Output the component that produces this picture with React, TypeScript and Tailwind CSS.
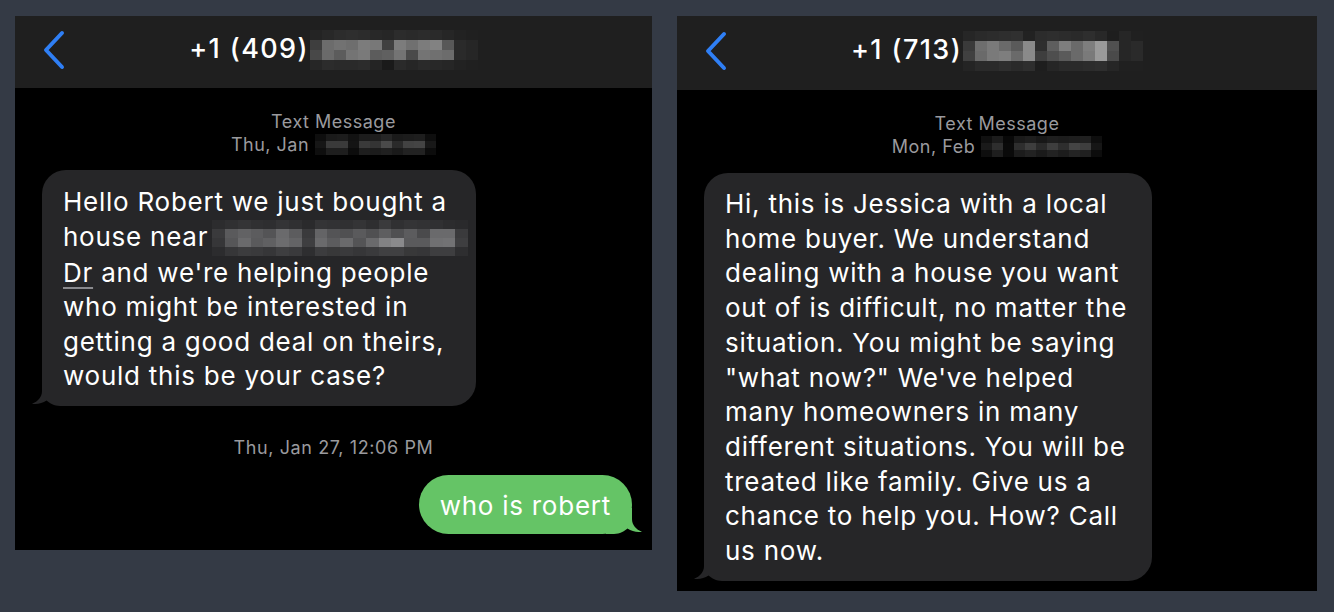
import React from "react";

const FONT = { fontFamily: "Inter, 'Noto Sans', 'Liberation Sans', sans-serif" };

function Pixels({ rows, cw, rh }: { rows: string[][]; cw: number; rh: number }) {
  return (
    <div className="flex flex-col">
      {rows.map((r, i) => (
        <div key={i} className="flex">
          {r.map((c, j) => (
            <div key={j} style={{ width: cw, height: rh, background: c }} />
          ))}
        </div>
      ))}
    </div>
  );
}

const titleBlurL = [
  ["#242424", "#282828", "#2c2c2c", "#2e2e2e", "#2c2c2c", "#282828", "#262626", "#2c2c2c", "#2a2a2a", "#2c2c2c", "#2a2a2a", "#262626", "#222222", "#202020"],
  ["#3e3e3e", "#6c6c6c", "#727272", "#6e6e6e", "#7c7c7c", "#787878", "#404040", "#7c7c7c", "#707070", "#7c7c7c", "#828282", "#585858", "#2a2a2a", "#262626"],
  ["#484848", "#6a6a6a", "#5c5c5c", "#747474", "#7a7a7a", "#5c5c5c", "#606060", "#747474", "#4a4a4a", "#747474", "#707070", "#6c6c6c", "#2a2a2a", "#262626"],
  ["#262626", "#2c2c2c", "#2a2a2a", "#2a2a2a", "#2c2c2c", "#242424", "#1a1a1a", "#2a2a2a", "#262626", "#2a2a2a", "#282828", "#262626", "#222222", "#202020"],
];

const titleBlurR = [
  ["#262626", "#2a2a2a", "#2c2c2c", "#2e2e2e", "#303030", "#222222", "#2c2c2c", "#2e2e2e", "#2c2c2c", "#2a2a2a", "#2e2e2e", "#282828", "#1e1e1e", "#262626", "#202020"],
  ["#3a3a3a", "#6e6e6e", "#7a7a7a", "#6a6a6a", "#5a5a5a", "#8a8a8a", "#2e2e2e", "#5e5e5e", "#7e7e7e", "#6a6a6a", "#7e7e7e", "#9a9a9a", "#505050", "#262626", "#2a2a2a"],
  ["#404040", "#6a6a6a", "#7a7a7a", "#7e7e7e", "#6a6a6a", "#8a8a8a", "#3e3e3e", "#4e4e4e", "#5a5a5a", "#6a6a6a", "#7a7a7a", "#9a9a9a", "#4a4a4a", "#262626", "#2a2a2a"],
  ["#242424", "#2a2a2a", "#2a2a2a", "#2e2e2e", "#2a2a2a", "#2e2e2e", "#1e1e1e", "#262626", "#2a2a2a", "#2a2a2a", "#2c2c2c", "#2e2e2e", "#262626", "#202020", "#202020"],
];

const dateBlurL = [
  ["#0e0e0e", "#1a1a1a", "#1c1c1c", "#121212", "#1c1c1c", "#1e1e1e", "#262626", "#1a1a1a", "#1c1c1c", "#1e1e1e", "#0e0e0e"],
  ["#161616", "#3a3a3a", "#3a3a3a", "#141414", "#3a3a3a", "#343434", "#4a4a4a", "#2a2a2a", "#424242", "#444444", "#181818"],
  ["#0e0e0e", "#1e1e1e", "#1e1e1e", "#0c0c0c", "#1e1e1e", "#1c1c1c", "#202020", "#1a1a1a", "#222222", "#222222", "#0c0c0c"],
];

const dateBlurR = [
  ["#101010", "#1c1c1c", "#080808", "#1a1a1a", "#1e1e1e", "#181818", "#1e1e1e", "#1c1c1c", "#1e1e1e", "#202020", "#0e0e0e"],
  ["#1a1a1a", "#2e2e2e", "#0a0a0a", "#2e2e2e", "#3e3e3e", "#2a2a2a", "#3e3e3e", "#2e2e2e", "#444444", "#3e3e3e", "#161616"],
  ["#0e0e0e", "#1e1e1e", "#0a0a0a", "#1c1c1c", "#222222", "#1a1a1a", "#222222", "#1c1c1c", "#242424", "#202020", "#0c0c0c"],
];

const addrBlur = [
  ["#2c2c2e", "#303032", "#343436", "#303032", "#2e2e30", "#343436", "#303032", "#2a2a2c", "#343436", "#323234", "#303032", "#343436", "#2e2e30", "#3a3a3c", "#303032", "#343436", "#323234", "#303032", "#2c2c2e", "#2a2a2c"],
  ["#3a3a3c", "#5a5a5c", "#626264", "#5c5c5e", "#545456", "#6a6a6c", "#5c5c5e", "#3a3a3c", "#646466", "#545456", "#505052", "#5a5a5c", "#505052", "#5e5e60", "#505052", "#5c5c5e", "#4a4a4c", "#6a6a6c", "#6a6a6c", "#3a3a3c"],
  ["#363638", "#565658", "#6a6a6c", "#5a5a5c", "#606062", "#6c6c6e", "#646466", "#3e3e40", "#6a6a6c", "#5c5c5e", "#6a6a6c", "#545456", "#6a6a6c", "#828284", "#8a8a8c", "#5a5a5c", "#5a5a5c", "#707072", "#727274", "#3e3e40"],
  ["#2c2c2e", "#363638", "#3c3c3e", "#3a3a3c", "#363638", "#3e3e40", "#3a3a3c", "#2e2e30", "#3c3c3e", "#383839", "#3a3a3c", "#363638", "#3a3a3c", "#404042", "#404042", "#383839", "#363638", "#3e3e40", "#3e3e40", "#2e2e30"],
];

function Chevron() {
  return (
    <svg width="26" height="40" viewBox="0 0 26 40" fill="none">
      <path d="M21 3 L5 20 L21 37" stroke="#2f7ff5" strokeWidth="4" strokeLinecap="round" strokeLinejoin="round" />
    </svg>
  );
}

function Tail({ color, side }: { color: string; side: "left" | "right" }) {
  return (
    <svg
      width="36"
      height="26"
      viewBox="0 0 36 26"
      className={side === "left" ? "absolute left-[-10px] bottom-0" : "absolute right-[-10px] bottom-0 scale-x-[-1]"}
    >
      <path d="M10 0 L10 11 C10 17 6 21.5 0 23.8 C5 24.6 10.5 23.4 14.5 20.6 C18 23.6 22 26 28 26 L36 26 L36 0 Z" fill={color} />
    </svg>
  );
}

function Header({ area, blur }: { area: string; blur: string[][] }) {
  return (
    <div className="grid grid-cols-[1fr_auto_1fr] items-center bg-[#1f1f1f] h-full pb-[5px]">
      <div className="pl-[26px]">
        <Chevron />
      </div>
      <div className="flex items-center">
        <span className="text-white text-[27px] font-[550] tracking-[1.4px]">+1 ({area})</span>
        <div className="ml-[1px]">
          <Pixels rows={blur} cw={12} rh={10} />
        </div>
      </div>
      <div />
    </div>
  );
}

function Meta({ day, blur }: { day: string; blur: string[][] }) {
  return (
    <div className="flex flex-col items-center text-[18px] leading-[23px] tracking-[0.5px] text-[#9a9a9e] pt-[22px]">
      <div>Text Message</div>
      <div className="flex items-center">
        <span>{day}</span>
        <div className="ml-[6px]">
          <Pixels rows={blur} cw={11} rh={7} />
        </div>
      </div>
    </div>
  );
}

export default function App() {
  return (
    <div className="w-[1334px] h-[612px] bg-[#343a45] flex items-start pt-[16px] pl-[15px] gap-[25px]" style={FONT}>
      {/* Left panel */}
      <div className="w-[637px] h-[534px] bg-black flex flex-col">
        <div className="h-[72px]">
          <Header area="409" blur={titleBlurL} />
        </div>
        <div className="flex flex-col">
          <Meta day="Thu, Jan" blur={dateBlurL} />
          <div className="relative ml-[27px] mt-[14px] w-[434px] rounded-[24px] bg-[#262628] pl-[21px] pt-[15px] pb-[12px] text-white text-[26px] leading-[34.6px] tracking-[0.75px]">
            <Tail color="#262628" side="left" />
            <div className="relative">
              <div className="whitespace-nowrap">Hello Robert we just bought a</div>
              <div className="whitespace-nowrap flex items-center">
                <span>house near</span>
                <div className="ml-[4px]">
                  <Pixels rows={addrBlur} cw={12.8} rh={9} />
                </div>
              </div>
              <div className="whitespace-nowrap">
                <span className="underline decoration-[#8a8a8e] decoration-[1.5px] underline-offset-[5px]">Dr</span> and we're helping people
              </div>
              <div className="whitespace-nowrap">who might be interested in</div>
              <div className="whitespace-nowrap">getting a good deal on theirs,</div>
              <div className="whitespace-nowrap">would this be your case?</div>
            </div>
          </div>
          <div className="text-center text-[18px] leading-[23px] tracking-[0.6px] text-[#9a9a9e] mt-[30px]">Thu, Jan 27, 12:06 PM</div>
          <div className="relative self-end mr-[20px] mt-[16px] h-[59px] rounded-[30px] bg-[#65c466] px-[21px] flex items-center text-white text-[26px] tracking-[0.75px]">
            <Tail color="#65c466" side="right" />
            <span className="relative whitespace-nowrap pt-[3px]">who is robert</span>
          </div>
        </div>
      </div>

      {/* Right panel */}
      <div className="w-[640px] h-[575px] bg-black flex flex-col">
        <div className="h-[74px]">
          <Header area="713" blur={titleBlurR} />
        </div>
        <div className="flex flex-col">
          <Meta day="Mon, Feb" blur={dateBlurR} />
          <div className="relative ml-[27px] mt-[15px] w-[448px] rounded-[24px] bg-[#262628] pl-[21px] pt-[14px] pb-[12px] text-white text-[26px] leading-[34.7px] tracking-[0.75px]">
            <Tail color="#262628" side="left" />
            <div className="relative">
              <div className="whitespace-nowrap">Hi, this is Jessica with a local</div>
              <div className="whitespace-nowrap">home buyer. We understand</div>
              <div className="whitespace-nowrap">dealing with a house you want</div>
              <div className="whitespace-nowrap">out of is difficult, no matter the</div>
              <div className="whitespace-nowrap">situation. You might be saying</div>
              <div className="whitespace-nowrap">"what now?" We've helped</div>
              <div className="whitespace-nowrap">many homeowners in many</div>
              <div className="whitespace-nowrap">different situations. You will be</div>
              <div className="whitespace-nowrap">treated like family. Give us a</div>
              <div className="whitespace-nowrap">chance to help you. How? Call</div>
              <div className="whitespace-nowrap">us now.</div>
            </div>
          </div>
        </div>
      </div>
    </div>
  );
}
